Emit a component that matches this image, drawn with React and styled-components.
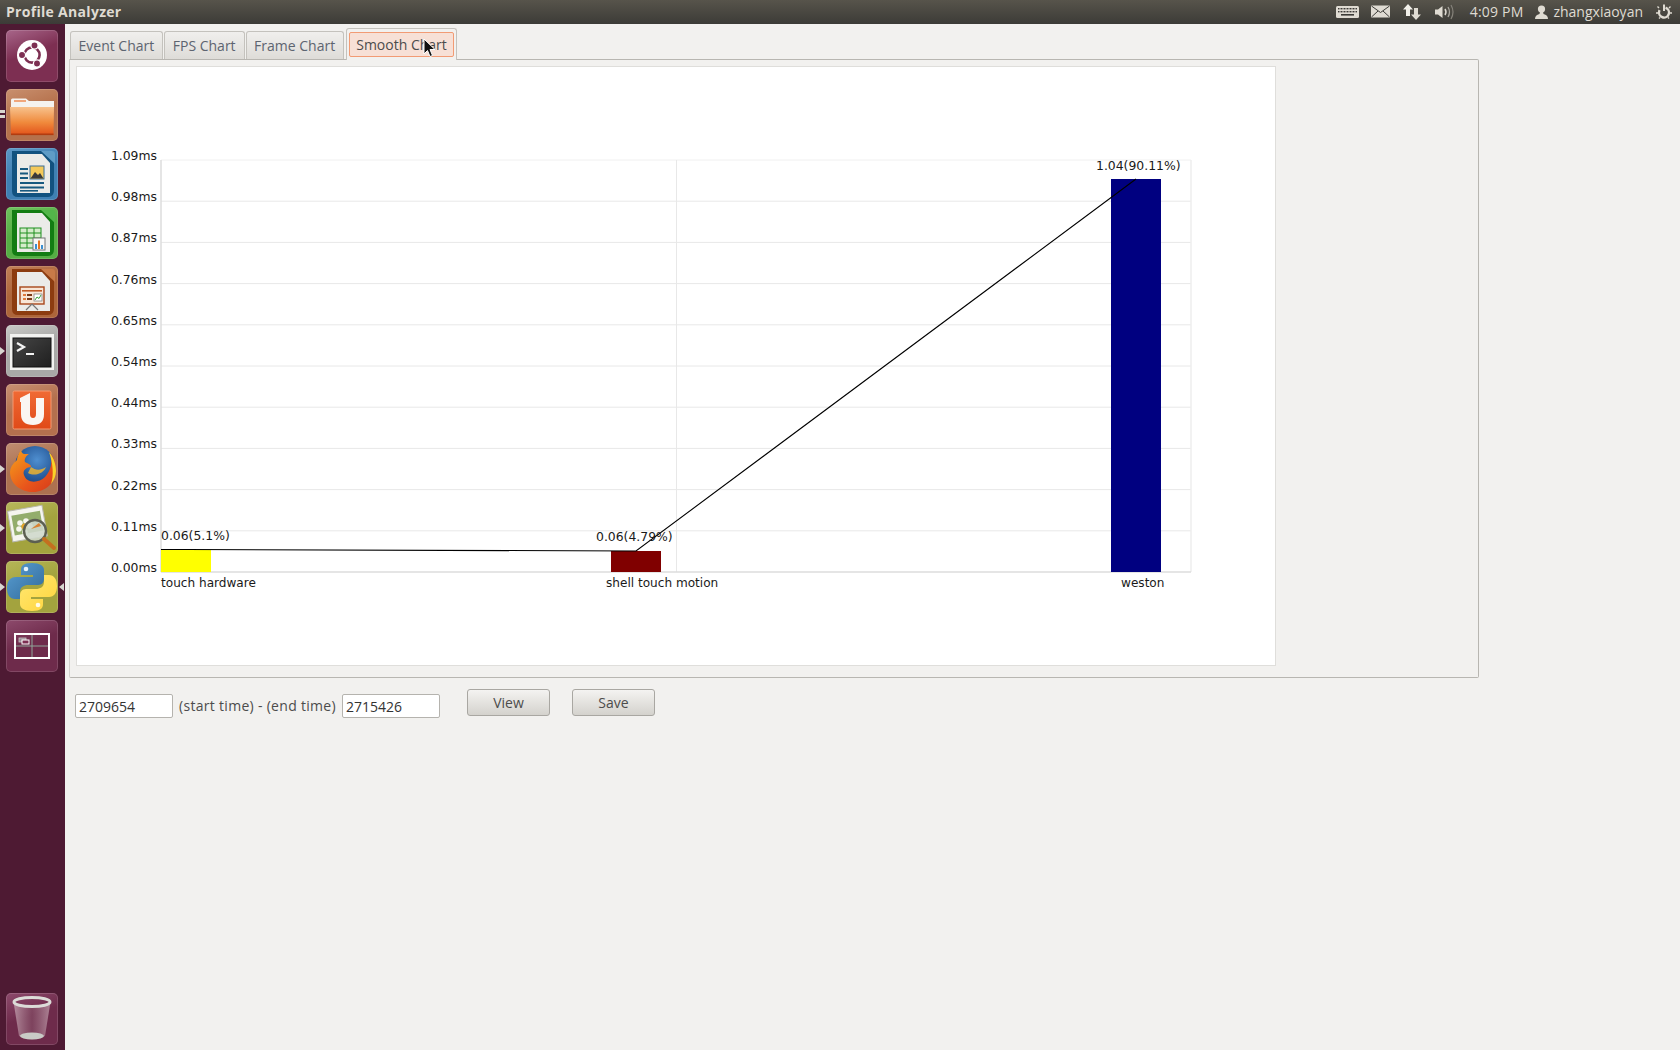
import styled, { createGlobalStyle } from "styled-components"

const GlobalStyle = createGlobalStyle`
    html, body {
        margin: 0;
        padding: 0;
        height: 100%;
        background: #f2f1ef;
        overflow: hidden;
    }
`

const UI_FONT = `"Open Sans", "Noto Sans", sans-serif`
const CHART_FONT = `"DejaVu Sans", sans-serif`

const yTicks = ["1.09ms", "0.98ms", "0.87ms", "0.76ms", "0.65ms", "0.54ms", "0.44ms", "0.33ms", "0.22ms", "0.11ms", "0.00ms"]
const PLOT = { left: 161, right: 1191, top: 160, bottom: 572 }

const bars = [
    { x: 161, top: 550, color: "#ffff00" },
    { x: 611, top: 551, color: "#800000" },
    { x: 1111, top: 179, color: "#000080" },
]

const valueLabels = [
    { x: 161, y: 540, text: "0.06(5.1%)" },
    { x: 596, y: 541, text: "0.06(4.79%)" },
    { x: 1096, y: 170, text: "1.04(90.11%)" },
]

const nameLabels = [
    { x: 161, text: "touch hardware" },
    { x: 606, text: "shell touch motion" },
    { x: 1121, text: "weston" },
]

function Chart() {
    const step = (PLOT.bottom - PLOT.top) / 10
    return (
        <ChartSvg viewBox="76 66 1200 600" width="1200" height="600">
            {yTicks.map((t, i) => {
                const y = PLOT.top + step * i
                return (
                    <g key={t}>
                        {i < 10 && <line x1={PLOT.left} x2={PLOT.right} y1={y} y2={y} stroke={i === 0 ? "#f0f0f0" : "#e8e8e8"} strokeWidth="1" />}
                        <ChartText x="157" y={y} textAnchor="end">{t}</ChartText>
                    </g>
                )
            })}
            <line x1="676.5" x2="676.5" y1={PLOT.top} y2={PLOT.bottom} stroke="#e8e8e8" />
            <line x1={PLOT.right} x2={PLOT.right} y1={PLOT.top} y2={PLOT.bottom} stroke="#eeeeee" strokeWidth="1.5" />
            <line x1={PLOT.left} x2={PLOT.left} y1={PLOT.top} y2={PLOT.bottom} stroke="#dddddd" strokeWidth="1.5" />
            <line x1={PLOT.left} x2={PLOT.right} y1={PLOT.bottom} y2={PLOT.bottom} stroke="#dddddd" strokeWidth="1.5" />
            {bars.map(b => (
                <rect key={b.x} x={b.x} y={b.top} width="50" height={PLOT.bottom - b.top} fill={b.color} />
            ))}
            <polyline points="161,549.5 186,549.5 636,551 1136,179" fill="none" stroke="#000" strokeWidth="1.1" />
            {valueLabels.map(l => (
                <ChartText key={l.text} x={l.x} y={l.y}>{l.text}</ChartText>
            ))}
            {nameLabels.map(l => (
                <ChartText key={l.text} x={l.x} y="587" $size={12.1}>{l.text}</ChartText>
            ))}
        </ChartSvg>
    )
}

function UbuntuIcon() {
    return (
        <svg viewBox="0 0 52 52" width="52" height="52">
            <circle cx="26" cy="25" r="15" fill="#fff" />
            <circle cx="26" cy="25" r="7.6" fill="none" stroke="#7d2f52" strokeWidth="2.6" />
            <circle cx="28.5" cy="15.5" r="3.6" fill="#7d2f52" stroke="#fff" strokeWidth="1.3" />
            <circle cx="16" cy="25" r="3.6" fill="#7d2f52" stroke="#fff" strokeWidth="1.3" />
            <circle cx="31" cy="33.5" r="3.6" fill="#7d2f52" stroke="#fff" strokeWidth="1.3" />
        </svg>
    )
}

function FolderIcon() {
    return (
        <svg viewBox="0 0 52 52" width="52" height="52">
            <defs>
                <linearGradient id="folderBody" x1="0" y1="0" x2="0" y2="1">
                    <stop offset="0" stopColor="#f7c28d" />
                    <stop offset="0.55" stopColor="#f08a3c" />
                    <stop offset="1" stopColor="#e2521a" />
                </linearGradient>
            </defs>
            <path d="M5 11 q0-1.5 1.5-1.5 H20 l3 2.5 H48 v8 H5z" fill="#f5f3ef" />
            <rect x="8" y="11" width="12" height="2" fill="#f0a77c" />
            <rect x="5" y="18" width="43" height="2" fill="#c9c6c0" />
            <path d="M4 18 H48 L47.5 46 H5z" fill="url(#folderBody)" />
            <rect x="5" y="44.5" width="42.5" height="1.6" fill="#b23c10" />
        </svg>
    )
}

function DocSheet({ fold, children, edge }) {
    return (
        <svg viewBox="0 0 52 52" width="52" height="52">
            <path d="M6 3 H36 L48 14 V42 Q48 49 42 49 H12 Q6 49 6 43z" fill={edge} />
            <path d="M11 6 H36 L44 15 V45 H11z" fill="#ebebe8" />
            <path d="M35 3 H46 a3 3 0 0 1 3 3 V16z" fill={fold} />
            {children}
        </svg>
    )
}

function WriterIcon() {
    return (
        <DocSheet fold="#5f9cc6" edge="#12527f">
            <rect x="14" y="20" width="8" height="2" fill="#17597f" />
            <rect x="14" y="24.5" width="8" height="2" fill="#17597f" />
            <rect x="14" y="29" width="8" height="2" fill="#17597f" />
            <rect x="14" y="34" width="24" height="2" fill="#17597f" />
            <rect x="14" y="38.5" width="24" height="2" fill="#17597f" />
            <rect x="14" y="42" width="18" height="1.6" fill="#17597f" />
            <rect x="24" y="18" width="14" height="13" fill="#f4c95a" stroke="#3c6e95" />
            <path d="M24.5 30.5 L29 24 L32 27 L34 25 L37.5 30.5z" fill="#3a3a3a" />
        </DocSheet>
    )
}

function CalcIcon() {
    return (
        <DocSheet fold="#53b64a" edge="#137c13">
            <g stroke="#1e8f1e" strokeWidth="1" fill="#d5eccb">
                <rect x="14" y="21" width="21" height="20" />
                <path d="M14 26 H35 M14 31 H35 M14 36 H35 M21 21 V41 M28 21 V41" fill="none" />
            </g>
            <rect x="27" y="31" width="12" height="12" fill="#f7f7f5" stroke="#777" />
            <rect x="29" y="37" width="2" height="5" fill="#3a8fd0" />
            <rect x="32" y="33.5" width="2" height="8.5" fill="#e6761f" />
            <rect x="35" y="38" width="2" height="4" fill="#3a8fd0" />
        </DocSheet>
    )
}

function ImpressIcon() {
    return (
        <DocSheet fold="#c87a48" edge="#8c3c10">
            <rect x="14" y="21" width="24" height="17" fill="#f8e6d6" stroke="#a8471a" strokeWidth="1.4" />
            <rect x="16" y="24" width="20" height="1.6" fill="#c05a24" />
            <rect x="17" y="28" width="3" height="2" fill="#e07a3c" />
            <rect x="21" y="28" width="5" height="2" fill="#7a3a18" />
            <rect x="17" y="32" width="3" height="2" fill="#e07a3c" />
            <rect x="21" y="32" width="5" height="2" fill="#7a3a18" />
            <rect x="28" y="28" width="8" height="7" fill="#fff" stroke="#777" strokeWidth="0.7" />
            <path d="M29 34 L31 31 L33 32.5 L35 29" fill="none" stroke="#3aa03a" strokeWidth="1" />
            <path d="M26 38 L20 44 M26 38 L32 44" stroke="#777" strokeWidth="1.2" />
        </DocSheet>
    )
}

function TerminalIcon() {
    return (
        <svg viewBox="0 0 52 52" width="52" height="52">
            <defs>
                <linearGradient id="termScreen" x1="0" y1="0" x2="1" y2="1">
                    <stop offset="0" stopColor="#454545" />
                    <stop offset="1" stopColor="#1f1f1f" />
                </linearGradient>
            </defs>
            <rect x="4" y="9" width="44" height="36" fill="#f2f2f0" />
            <rect x="7" y="13" width="38" height="29" fill="url(#termScreen)" stroke="#111" />
            <path d="M11 18 L18 22 L11 26" fill="none" stroke="#f2f2f2" strokeWidth="2.2" />
            <rect x="20" y="28" width="8" height="2" fill="#f2f2f2" />
        </svg>
    )
}

function SoftwareIcon() {
    return (
        <svg viewBox="0 0 52 52" width="52" height="52">
            <defs>
                <linearGradient id="softBag" x1="0" y1="0" x2="0" y2="1">
                    <stop offset="0" stopColor="#f06a34" />
                    <stop offset="1" stopColor="#e04a18" />
                </linearGradient>
            </defs>
            <rect x="7" y="7" width="38" height="38" rx="1.5" fill="url(#softBag)" stroke="#f59a72" />
            <path d="M14 14 L24 9 V30 Q24 34 27 34 Q30 34 30 30 V14 H38 V30 Q38 41 27 41 Q15 41 15 30 V18 H14z" fill="#faf6f2" />
        </svg>
    )
}

function FirefoxIcon() {
    return (
        <svg viewBox="0 0 52 52" width="52" height="52">
            <defs>
                <radialGradient id="ffGlobe" cx="0.55" cy="0.35" r="0.7">
                    <stop offset="0" stopColor="#4f8fd0" />
                    <stop offset="1" stopColor="#123d7c" />
                </radialGradient>
                <linearGradient id="ffFox" x1="0" y1="0" x2="1" y2="1">
                    <stop offset="0" stopColor="#f6a21a" />
                    <stop offset="0.6" stopColor="#e8551c" />
                    <stop offset="1" stopColor="#d4381a" />
                </linearGradient>
            </defs>
            <circle cx="29" cy="23" r="20" fill="url(#ffGlobe)" />
            <path d="M15 7 Q11 13 11 17 Q4 23 4 29 C4 42 16 49 27 49 C40 49 50 39 50 27 C50 20 48 14 44 10 C47 18 45 28 39 34 C33 40 21 41 18 32 C16 27 21 24 25 24 C26 22 21 20 19 19 C18 16 20 13 23 11 C19 11 16 12 15 7z" fill="url(#ffFox)" />
            <path d="M43 9 C48 15 50 22 50 28 C50 33 48 37 45 41 C48 33 47 20 43 9z" fill="#f8d32a" />
            <path d="M25 24 C29 27 34 28 40 24 C38 30 29 34 22 30z" fill="#f7b526" opacity="0.8" />
        </svg>
    )
}

function ViewerIcon() {
    return (
        <svg viewBox="0 0 52 52" width="52" height="52">
            <g transform="rotate(-10 22 22)">
                <rect x="4" y="6" width="35" height="31" fill="#f5f5ef" stroke="#b8b8ae" />
                <rect x="7" y="11" width="29" height="20" fill="#93ad6c" />
            </g>
            <g fill="#f6f6ee">
                <circle cx="14" cy="21" r="2.8" />
                <circle cx="20" cy="19" r="2.8" />
                <circle cx="24" cy="24" r="2.8" />
                <circle cx="13" cy="27" r="2.8" />
                <circle cx="19" cy="30" r="2.8" />
            </g>
            <circle cx="18.5" cy="24.5" r="3" fill="#e8a428" />
            <circle cx="29" cy="29" r="11" fill="#cfd8cc" fillOpacity="0.88" stroke="#5c5f52" strokeWidth="2.4" />
            <path d="M25 27 L33 21 L35 24z" fill="#d98232" />
            <path d="M38 37 L48 46" stroke="#c4701f" strokeWidth="4" strokeLinecap="round" />
        </svg>
    )
}

function PythonIcon() {
    return (
        <svg viewBox="0 0 52 52" width="52" height="52">
            <defs>
                <linearGradient id="pyBlue" x1="0" y1="0" x2="1" y2="1">
                    <stop offset="0" stopColor="#5a9fd4" />
                    <stop offset="1" stopColor="#306998" />
                </linearGradient>
                <linearGradient id="pyYellow" x1="0" y1="0" x2="1" y2="1">
                    <stop offset="0" stopColor="#ffe873" />
                    <stop offset="1" stopColor="#ffd43b" />
                </linearGradient>
            </defs>
            <path d="M26 2 C17 2 15 5 15 9 V14 H27 V16 H10 C4 16 1 20 1 27 C1 34 4 38 9 38 H14 V31 C14 26 18 24 22 24 H32 C36 24 38 21 38 18 V9 C38 5 34 2 26 2z" fill="url(#pyBlue)" />
            <circle cx="20" cy="8" r="2.3" fill="#eaf3fa" />
            <path d="M26 50 C35 50 37 47 37 43 V38 H25 V36 H43 C48 36 51 32 51 25 C51 18 48 14 43 14 H38 V21 C38 26 34 28 30 28 H20 C16 28 14 31 14 34 V43 C14 47 18 50 26 50z" fill="url(#pyYellow)" />
            <circle cx="32" cy="44" r="2.3" fill="#fffbe6" />
        </svg>
    )
}

function WorkspaceIcon() {
    return (
        <svg viewBox="0 0 52 52" width="52" height="52">
            <rect x="9" y="14" width="34" height="24" fill="none" stroke="#fff" strokeWidth="2" />
            <path d="M26 15 V37 M10 26 H42" stroke="#8fa79a" strokeWidth="1" />
            <rect x="13" y="18" width="7" height="4" fill="#9a8a94" stroke="#c9c4c4" strokeWidth="0.8" />
            <rect x="16" y="20" width="7" height="4" fill="#7d2f52" stroke="#fff" strokeWidth="1" />
        </svg>
    )
}

function TrashIcon() {
    return (
        <svg viewBox="0 0 52 52" width="52" height="52">
            <defs>
                <linearGradient id="trashBody" x1="0" y1="0" x2="1" y2="0">
                    <stop offset="0" stopColor="#c7a8b4" stopOpacity="0.75" />
                    <stop offset="0.5" stopColor="#8d5a70" stopOpacity="0.5" />
                    <stop offset="1" stopColor="#c7a8b4" stopOpacity="0.7" />
                </linearGradient>
            </defs>
            <path d="M8 12 L13 43 Q26 50 39 43 L44 12z" fill="url(#trashBody)" />
            <ellipse cx="26" cy="43" rx="12" ry="3.5" fill="#c9cbc6" />
            <ellipse cx="26" cy="9" rx="18" ry="4.5" fill="none" stroke="#dcdcd8" strokeWidth="3" />
        </svg>
    )
}

const launcherItems = [
    { id: "ubuntu", Icon: UbuntuIcon, tile: "#7d2f52", shine: "#a8668a" },
    { id: "files", Icon: FolderIcon, tile: "#b5714c", shine: "#c9906f", pipsLeft: 2 },
    { id: "writer", Icon: WriterIcon, tile: "#3f80b3", shine: "#5c98c6" },
    { id: "calc", Icon: CalcIcon, tile: "#55ad44", shine: "#6fc25e" },
    { id: "impress", Icon: ImpressIcon, tile: "#ad653a", shine: "#c08058" },
    { id: "terminal", Icon: TerminalIcon, tile: "#a9a9a7", shine: "#c9c9c7", pipsLeft: 1 },
    { id: "software", Icon: SoftwareIcon, tile: "#b4704e", shine: "#c79073" },
    { id: "firefox", Icon: FirefoxIcon, tile: "#ad7150", shine: "#c08e72", pipsLeft: 1 },
    { id: "viewer", Icon: ViewerIcon, tile: "#a3a33e", shine: "#b8b85c", pipsLeft: 1 },
    { id: "python", Icon: PythonIcon, tile: "#a3a33e", shine: "#b5b558", pipsLeft: 1, active: true },
    { id: "workspaces", Icon: WorkspaceIcon, tile: "#6e2b4b", shine: "#8d4a6c" },
]

function LauncherTile({ item }) {
    const { Icon } = item
    return (
        <Tile $tile={item.tile} $shine={item.shine}>
            <Icon />
            {item.pipsLeft === 1 && <PipLeft />}
            {item.pipsLeft === 2 && <PipStack><PipBar /><PipBar /></PipStack>}
            {item.active && <PipRight />}
        </Tile>
    )
}

export default function App() {
    return (
        <Desktop>
            <GlobalStyle />
            <TopBar>
                <WindowTitle>Profile Analyzer</WindowTitle>
                <Indicators>
                    <IndicatorIcon viewBox="0 0 23 14" width="23" height="14" $mr={12}>
                        <rect x="0" y="1" width="23" height="12" rx="1.5" fill="#dfdbd2" />
                        <g fill="#3c3b37">
                            <rect x="2" y="3" width="19" height="1.4" />
                            <rect x="2" y="6" width="19" height="1.4" />
                            <rect x="5" y="9" width="13" height="1.6" />
                        </g>
                        <path d="M4 2.5 V8.5 M7 2.5 V8.5 M10 2.5 V8.5 M13 2.5 V8.5 M16 2.5 V8.5 M19 2.5 V8.5" stroke="#dfdbd2" strokeWidth="1" />
                    </IndicatorIcon>
                    <IndicatorIcon viewBox="0 0 19 13" width="19" height="13" $mr={13}>
                        <rect x="0" y="0.5" width="19" height="12" rx="0.5" fill="#dfdbd2" />
                        <path d="M0.5 1 L9.5 7.5 L18.5 1 M0.5 12 L7 6 M18.5 12 L12 6" fill="none" stroke="#3c3b37" strokeWidth="1" />
                    </IndicatorIcon>
                    <IndicatorIcon viewBox="0 0 18 16" width="18" height="16" $mr={14}>
                        <path d="M5 0 L10 5.5 H7 V12 H3 V5.5 H0z" fill="#f2f0ea" />
                        <path d="M13 16 L8 10.5 H11 V4 H15 V10.5 H18z" fill="#dfdbd2" />
                    </IndicatorIcon>
                    <IndicatorIcon viewBox="0 0 20 16" width="20" height="16" $mr={15}>
                        <path d="M0 5.5 H3 L7.5 2 V14 L3 10.5 H0z" fill="#dfdbd2" />
                        <path d="M10 5 Q12 8 10 11" fill="none" stroke="#dfdbd2" strokeWidth="1.5" />
                        <path d="M13 3 Q16 8 13 13" fill="none" stroke="#a8a59d" strokeWidth="1.3" />
                        <path d="M16 1 Q20 8 16 15" fill="none" stroke="#85827a" strokeWidth="1.2" />
                    </IndicatorIcon>
                    <PanelText $mr={12} $spacing={0.2}>4:09 PM</PanelText>
                    <IndicatorIcon viewBox="0 0 13 14" width="13" height="14" $mr={5}>
                        <circle cx="6.5" cy="4" r="3.6" fill="#dfdbd2" />
                        <path d="M5 6.5 H8 L8.5 9 Q13 10 13 14 H0 Q0 10 4.5 9z" fill="#dfdbd2" />
                    </IndicatorIcon>
                    <PanelText $mr={13}>zhangxiaoyan</PanelText>
                    <IndicatorIcon viewBox="0 0 16 16" width="16" height="16">
                        <g fill="none" stroke="#dfdbd2">
                            <circle cx="8" cy="8.5" r="5" strokeWidth="2.4" strokeDasharray="24 7.5" transform="rotate(-72 8 8.5)" />
                            <path d="M8 0.5 V7" strokeWidth="2" />
                            <path d="M1.5 2.5 L3 4 M14.5 2.5 L13 4 M0 9 H2 M14 9 H16 M3 14.5 L4 13.5 M13 14.5 L12 13.5" strokeWidth="1.4" />
                        </g>
                    </IndicatorIcon>
                </Indicators>
            </TopBar>
            <Body>
                <Launcher>
                    {launcherItems.map(item => (
                        <LauncherTile key={item.id} item={item} />
                    ))}
                    <TrashSlot>
                        <Tile $tile="#6e2b4b" $shine="#8d4a6c">
                            <TrashIcon />
                        </Tile>
                    </TrashSlot>
                </Launcher>
                <Main>
                    <TabRow>
                        <Tab>Event Chart</Tab>
                        <Tab>FPS Chart</Tab>
                        <Tab>Frame Chart</Tab>
                        <ActiveTab>
                            <ActiveTabInner>Smooth Chart</ActiveTabInner>
                            <Cursor viewBox="0 0 13 20" width="13" height="20">
                                <path d="M1 1 V16 L4.5 12.5 L7 18.5 L9.5 17.5 L7 11.5 H12z" fill="#111" stroke="#fff" strokeWidth="1" />
                            </Cursor>
                        </ActiveTab>
                    </TabRow>
                    <Frame>
                        <Canvas>
                            <Chart />
                        </Canvas>
                    </Frame>
                    <Controls>
                        <TimeInput readOnly value="2709654" />
                        <ControlLabel>(start time) - (end time)</ControlLabel>
                        <TimeInput readOnly value="2715426" />
                        <ActionButton $ml={27}>View</ActionButton>
                        <ActionButton $ml={22}>Save</ActionButton>
                    </Controls>
                </Main>
            </Body>
        </Desktop>
    )
}

const Desktop = styled.div`
    width: 1680px;
    height: 1050px;
    display: flex;
    flex-direction: column;
    overflow: hidden;
    background: #f2f1ef;
    font-family: ${UI_FONT};
`
const TopBar = styled.div`
    height: 24px;
    flex-shrink: 0;
    box-sizing: border-box;
    display: flex;
    align-items: center;
    justify-content: space-between;
    padding: 0 8px 1px 6px;
    background: linear-gradient(#57544b, #3c3b37);
    color: #dfdbd2;
`
const WindowTitle = styled.div`
    font-size: 14px;
    font-weight: 700;
    letter-spacing: 0.3px;
    color: #dfdbd2;
`
const Indicators = styled.div`
    display: flex;
    align-items: center;
`
const IndicatorIcon = styled.svg`
    display: block;
    margin-right: ${p => p.$mr || 0}px;
`
const PanelText = styled.span`
    font-size: 14px;
    letter-spacing: ${p => p.$spacing || 0}px;
    color: #dfdbd2;
    margin-right: ${p => p.$mr || 0}px;
`
const Body = styled.div`
    flex: 1;
    display: flex;
    min-height: 0;
`
const Launcher = styled.div`
    width: 65px;
    flex-shrink: 0;
    box-sizing: border-box;
    padding: 6px 0 5px 6px;
    display: flex;
    flex-direction: column;
    gap: 7px;
    background: #4e1a33;
`
const TrashSlot = styled.div`
    margin-top: auto;
`
const Tile = styled.div`
    position: relative;
    width: 52px;
    height: 52px;
    border-radius: 5px;
    background: linear-gradient(160deg, ${p => p.$shine}, ${p => p.$tile} 45%, ${p => p.$tile});
    box-shadow: inset 0 0 0 1px rgba(255, 255, 255, 0.14);

    svg {
        display: block;
    }
`
const PipLeft = styled.span`
    position: absolute;
    left: -6px;
    top: 22px;
    width: 0;
    height: 0;
    border-top: 4px solid transparent;
    border-bottom: 4px solid transparent;
    border-left: 5px solid #d8d6d0;
`
const PipRight = styled.span`
    position: absolute;
    right: -6px;
    top: 22px;
    width: 0;
    height: 0;
    border-top: 4px solid transparent;
    border-bottom: 4px solid transparent;
    border-right: 5px solid #d8d6d0;
`
const PipStack = styled.span`
    position: absolute;
    left: -6px;
    top: 21px;
    display: flex;
    flex-direction: column;
    gap: 2px;
`
const PipBar = styled.span`
    display: block;
    width: 5px;
    height: 3px;
    background: #d8d6d0;
`
const Main = styled.div`
    flex: 1;
    min-width: 0;
    padding: 4px 0 0 4px;
`
const TabRow = styled.div`
    height: 31px;
    padding-left: 1px;
    display: flex;
    align-items: flex-end;
    gap: 1px;
    position: relative;
    z-index: 1;
`
const Tab = styled.div`
    height: 28px;
    box-sizing: border-box;
    padding: 0 8px 1px 7.5px;
    display: flex;
    align-items: center;
    border: 1px solid #c4c2bd;
    border-bottom: none;
    border-radius: 3px 3px 0 0;
    background: linear-gradient(#f0efed, #dedcd8);
    font-size: 14px;
    color: #5d6470;
`
const ActiveTab = styled.div`
    position: relative;
    height: 32px;
    box-sizing: border-box;
    margin-left: 1px;
    padding: 3px 2px 0;
    margin-bottom: -1px;
    border: 1px solid #c4c2bd;
    border-bottom: none;
    border-radius: 3px 3px 0 0;
    background: #f2f1ef;
`
const ActiveTabInner = styled.div`
    height: 25px;
    box-sizing: border-box;
    padding: 0 6px;
    display: flex;
    align-items: center;
    border: 1px solid #f29b74;
    border-radius: 2px;
    background: #f7e0d6;
    font-size: 14px;
    color: #4c4c4c;
`
const Cursor = styled.svg`
    position: absolute;
    left: 76px;
    top: 9px;
`
const Frame = styled.div`
    width: 1410px;
    height: 619px;
    box-sizing: border-box;
    padding: 6px;
    border: 1px solid #b8b6b1;
    border-left-color: #d2d0cc;
    border-radius: 0 2px 2px 2px;
`
const Canvas = styled.div`
    width: 1200px;
    height: 600px;
    box-shadow: inset 0 0 0 1px #dfdedb;
    background: #fff;
`
const ChartSvg = styled.svg`
    display: block;
`
const ChartText = styled.text`
    font-family: ${CHART_FONT};
    font-size: ${p => p.$size || 12.4}px;
    fill: #1a1a1a;
`
const Controls = styled.div`
    display: flex;
    align-items: flex-start;
    padding: 11px 0 0 6px;
`
const TimeInput = styled.input`
    width: 98px;
    height: 24px;
    box-sizing: border-box;
    margin-top: 5px;
    padding: 2px 3px;
    border: 1px solid #b5b3ae;
    border-radius: 2px;
    background: #fff;
    font-family: ${UI_FONT};
    font-size: 14px;
    color: #333;
    outline: none;
`
const ControlLabel = styled.span`
    margin: 5px 6px 0;
    line-height: 24px;
    font-size: 14px;
    letter-spacing: 0.3px;
    color: #4c4c4c;
`
const ActionButton = styled.button`
    width: 83px;
    height: 27px;
    margin-left: ${p => p.$ml}px;
    padding: 0;
    border: 1px solid #a9a7a2;
    border-radius: 3px;
    background: linear-gradient(#f4f3f1, #d4d2cd);
    font-family: ${UI_FONT};
    font-size: 14px;
    color: #4c4c4c;
`
